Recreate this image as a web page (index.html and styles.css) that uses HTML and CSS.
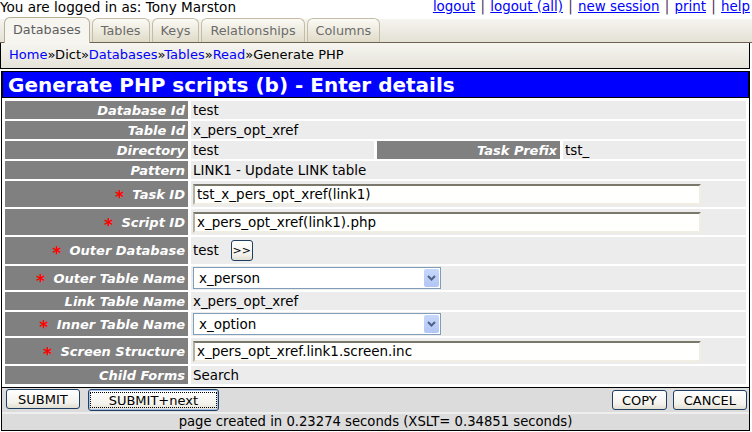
FILE: index.html
```html
<!DOCTYPE html>
<html>
<head>
<meta charset="utf-8">
<link rel="stylesheet" href="styles.css">
</head>
<body>
<div class="top">
  <span>You are logged in as: Tony Marston</span>
  <span class="links"><a href="#">logout</a> | <a href="#">logout (all)</a> | <a href="#">new session</a> | <a href="#">print</a> | <a href="#">help</a></span>
</div>
<div class="tabbar">
  <div class="tab active">Databases</div>
  <div class="tab">Tables</div>
  <div class="tab">Keys</div>
  <div class="tab">Relationships</div>
  <div class="tab">Columns</div>
</div>
<div class="crumbs"><a href="#">Home</a>»Dict»<a href="#">Databases</a>»<a href="#">Tables</a>»<a href="#">Read</a>»Generate PHP</div>
<div class="main">
  <div class="title">Generate PHP scripts (b) - Enter details</div>
  <table class="form">
    <colgroup><col><col><col><col></colgroup>
    <tr class="r18"><th>Database Id</th><td colspan="3">test</td></tr>
    <tr class="r18"><th>Table Id</th><td colspan="3">x_pers_opt_xref</td></tr>
    <tr class="r18"><th>Directory</th><td>test</td><th>Task Prefix</th><td>tst_</td></tr>
    <tr class="r18"><th>Pattern</th><td colspan="3">LINK1 - Update LINK table</td></tr>
    <tr class="r26"><th><span class="req">*</span> Task ID</th><td colspan="3"><div class="input">tst_x_pers_opt_xref(link1)</div></td></tr>
    <tr class="r26"><th><span class="req">*</span> Script ID</th><td colspan="3"><div class="input">x_pers_opt_xref(link1).php</div></td></tr>
    <tr class="r27"><th><span class="req">*</span> Outer Database</th><td colspan="3"><div class="popup"><span>test</span><span class="btn small">&gt;&gt;</span></div></td></tr>
    <tr class="r24"><th><span class="req">*</span> Outer Table Name</th><td colspan="3"><div class="select"><span class="val">x_person</span><span class="arrow"><svg width="9" height="6" viewBox="0 0 9 6"><path d="M1 1 L4.5 4.5 L8 1" fill="none" stroke="#4d6185" stroke-width="2"/></svg></span></div></td></tr>
    <tr class="r18"><th>Link Table Name</th><td colspan="3">x_pers_opt_xref</td></tr>
    <tr class="r24"><th><span class="req">*</span> Inner Table Name</th><td colspan="3"><div class="select"><span class="val">x_option</span><span class="arrow"><svg width="9" height="6" viewBox="0 0 9 6"><path d="M1 1 L4.5 4.5 L8 1" fill="none" stroke="#4d6185" stroke-width="2"/></svg></span></div></td></tr>
    <tr class="r26"><th><span class="req">*</span> Screen Structure</th><td colspan="3"><div class="input">x_pers_opt_xref.link1.screen.inc</div></td></tr>
    <tr class="r18"><th>Child Forms</th><td colspan="3">Search</td></tr>
  </table>
  <div class="actions">
    <div class="group left">
      <span class="btn wide">SUBMIT</span>
      <span class="btn focus"><span class="inner">SUBMIT+next</span></span>
    </div>
    <div class="group">
      <span class="btn">COPY</span>
      <span class="btn cancel">CANCEL</span>
    </div>
  </div>
  <div class="footer">page created in 0.23274 seconds (XSLT= 0.34851 seconds)</div>
</div>
</body>
</html>
```
FILE: styles.css
```css
body {
  margin: 0;
  width: 752px;
  font-family: "DejaVu Sans", Verdana, sans-serif;
  font-size: 13px;
  color: #000;
  background: #fff;
}
.top {
  display: flex;
  justify-content: space-between;
  height: 16px;
  line-height: 14px;
  padding-right: 2px;
  font-size: 13.6px;
}
.top a { color: #0000ff; text-decoration: underline; }
.links { color: #4a3058; word-spacing: 1px; font-size: 13.4px; }
.links a { word-spacing: 0; }
.tabbar {
  display: flex;
  align-items: flex-end;
  gap: 2px;
  padding-left: 4px;
  height: 26px;
  background: linear-gradient(to bottom, #fff 0, #fff 3px, #f5f4ef 3px, #e4e1d5 100%);
  border-bottom: 1px solid #6e6352;
}
.tab {
  height: 23px;
  line-height: 24px;
  padding: 0 8px;
  border: 1px solid #c4bca5;
  border-bottom: none;
  border-radius: 6px 6px 0 0;
  background: linear-gradient(#fbfaf5, #e0dbc8);
  color: #6b6b6b;
  font-size: 12.8px;
}
.tab.active {
  height: 25px;
  margin-bottom: -1px;
  background: #f6f5ef;
  color: #5e5e5e;
  border-color: #b8ae94;
}
.crumbs {
  height: 25px;
  line-height: 24px;
  border: 1px solid #000;
  border-top: none;
  margin-right: 2px;
  padding-left: 8px;
  background: linear-gradient(#f6f5f0, #e5e3d9);
  font-size: 13px;
}
.crumbs a { color: #0000ff; text-decoration: none; }
.main {
  margin: 1px 2px 0 1px;
  border: 1px solid #000;
  border-top: none;
}
.title {
  margin: 2px 0 0 0;
  height: 25px;
  line-height: 26px;
  border: 1px solid #000;
  background: #0000ff;
  color: #fff;
  font-weight: bold;
  font-size: 20px;
  padding-left: 5px;
  white-space: nowrap;
}
table.form {
  width: 100%;
  table-layout: fixed;
  border-spacing: 3px 2px;
  margin-top: 1px;
}
table.form th {
  background: #808080;
  color: #fff;
  font-style: italic;
  font-weight: bold;
  text-align: right;
  padding: 0 3px 0 2px;
  white-space: nowrap;
  font-size: 13px;
}
table.form td {
  background: #ececec;
  padding: 0 2px;
  white-space: nowrap;
  font-size: 13.4px;
}
.r18 { height: 18px; }
.r24 { height: 24px; }
.r26 { height: 26px; }
.r27 { height: 27px; }
.req {
  color: #ff0000;
  font-style: normal;
  font-size: 17px;
  margin-right: 4px;
  vertical-align: -4px;
  line-height: 10px;
}
.input {
  width: 502px;
  height: 17px;
  line-height: 17px;
  border-top: 2px solid #7a776b;
  border-left: 2px solid #b4b1a4;
  border-right: 2px solid #f0eee2;
  border-bottom: 2px solid #f0eee2;
  background: #fffffd;
  padding-left: 2px;
  font-size: 13.5px;
}
.popup { display: flex; align-items: center; gap: 12px; }
.select {
  display: flex;
  width: 246px;
  height: 20px;
  border: 1px solid #7f9db9;
  background: #fff;
}
.select .val { flex: 1; padding-left: 5px; line-height: 20px; font-size: 13.5px; }
.select .arrow {
  width: 15px;
  margin: 1px;
  display: flex;
  align-items: center;
  justify-content: center;
  background: linear-gradient(#c7d7fb, #b2c6f5);
  border-radius: 2px;
}
.btn {
  display: inline-flex;
  align-items: center;
  justify-content: center;
  height: 18px;
  padding: 0 9px;
  border: 1px solid #1f3f62;
  border-radius: 3px;
  background: linear-gradient(#ffffff, #f3f2ec 70%, #e2dfd2);
  font-size: 13px;
  color: #000;
}
.btn.wide { padding: 0 11px; }
.btn.cancel { padding: 0 10px; }
.btn.small { width: 20px; height: 19px; padding: 0; font-size: 11px; }
.btn.focus {
  padding: 1px;
  border-color: #1f3f62;
  box-shadow: inset 0 0 0 1px #a8c0ec;
}
.btn.focus .inner {
  display: flex;
  align-items: center;
  height: 14px;
  padding: 0 18px;
  border: 1px dotted #000;
}
.actions {
  display: flex;
  justify-content: space-between;
  align-items: center;
  height: 24px;
  padding: 0 2px 0 4px;
  border-top: 1px solid #000;
  margin-top: 1px;
  background: #dcdcdc;
}
.group { display: flex; gap: 6px; }
.group.left { gap: 8px; }
.footer {
  height: 16px;
  line-height: 16px;
  border-top: 2px solid #eeeeee;
  background: #dcdcdc;
  text-align: center;
  font-size: 13.2px;
}
```
